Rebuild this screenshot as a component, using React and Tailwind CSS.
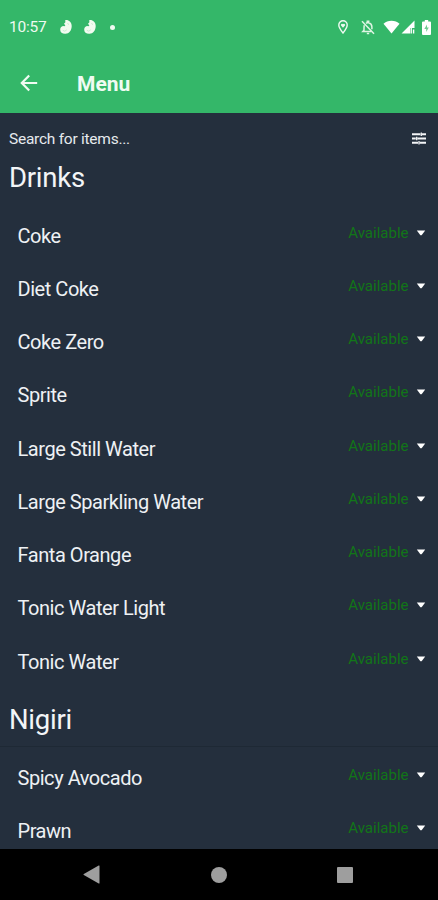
import React, { useState } from "react";

const sections = [
  {
    title: "Drinks",
    items: [
      "Coke",
      "Diet Coke",
      "Coke Zero",
      "Sprite",
      "Large Still Water",
      "Large Sparkling Water",
      "Fanta Orange",
      "Tonic Water Light",
      "Tonic Water",
    ],
  },
  { title: "Nigiri", divider: true, items: ["Spicy Avocado", "Prawn"] },
];

const AppIcon = () => (
  <svg width="12" height="16" viewBox="0 0 12 16" fill="#f2fbf0">
    <path d="M5.200 1.200C8.600.6 11.700 3.300 11.700 7c0 4.500-2.700 7.600-6.200 7.800C2.400 15 .2 13.300.2 10.700c0-2 1.100-3.500 2.800-3.700l1.400.3 1-.9L4 4.800 5.400 3.300z" />
    <path d="M2.800 11.300l2 .9 2-1.400M7.600 4l1 1.800" fill="none" stroke="#bfe8c9" strokeWidth="0.8" />
  </svg>
);

const StatusBar = () => (
  <div className="flex h-[54px] items-center pr-[7.5px] pl-[9px] text-white">
    <span className="w-[51px] text-[15.5px] leading-5 tracking-[-0.2px] text-[#effaf1]">10:57</span>
    <AppIcon />
    <span className="w-[12px]" />
    <AppIcon />
    <span className="ml-[14px] size-[5px] rounded-full bg-[#effaf1]" />
    <div className="ml-auto flex items-center">
      <svg width="10" height="14" viewBox="0 0 10 14" fill="none" stroke="#effaf1" strokeWidth="1.4">
        <path d="M5 13C3 10.500.8 7.800.8 5a4.200 4.200 0 0 1 8.400 0c0 2.800-2.200 5.500-4.200 8z" />
        <path d="M5 7.800 3 5.600a1.200 1.200 0 0 1 2-1.300 1.200 1.200 0 0 1 2 1.300z" fill="#effaf1" stroke="none" />
      </svg>
      <svg className="ml-[13px]" width="14" height="15" viewBox="0 0 14 15" fill="none" stroke="#dff5e4" strokeWidth="1.5">
        <path d="M1 1.300 13 13.800" />
        <path d="M3.300 5.200C2.900 6.500 3 8.500 3 10.300L1.800 11.600H10.300M5 3.400C5.500 3 6 2.800 6.300 2.700V1.300h1.400v1.400c2.100.6 3.200 2.300 3.200 4.300v2.300" />
        <path d="M5.800 13.500h2.400" />
      </svg>
      <svg className="ml-[8px]" width="17" height="14" viewBox="0 0 17 14" fill="white">
        <path d="M8.500 13.500.5 3.800C2.500 1.900 5.300.8 8.500.8s6 1.100 8 3z" />
      </svg>
      <svg className="ml-px" width="14" height="14" viewBox="0 0 14 14" fill="white">
        <path d="M13.500.5V8H9v5.500H.5z" />
        <path d="M10.200 8v5.500M12.600 9.500v4" stroke="white" strokeWidth="1.400" />
      </svg>
      <svg className="ml-[7px]" width="9" height="15" viewBox="0 0 9 15">
        <path d="M2.800 0h3.400v1.500H8q1 0 1 1V14q0 1-1 1H1q-1 0-1-1V2.500q0-1 1-1h1.800z" fill="white" />
        <path d="M5 4.500 2.300 9h1.900v3L6.800 7.600H5z" fill="#6fcb90" />
      </svg>
    </div>
  </div>
);

const Header = () => (
  <header className="h-[113px] shrink-0 bg-[#34b769]">
    <StatusBar />
    <div className="flex h-[58px] items-center pl-[20px] text-[#f0fbf2]">
      <button aria-label="Back">
        <svg width="18" height="18" viewBox="0 0 18 18" fill="none" stroke="currentColor" strokeWidth="2.200">
          <path d="M17.200 9H2.200M9.200 1.500 1.800 9l7.400 7.500" />
        </svg>
      </button>
      <h1 className="mt-[2px] ml-[39px] text-[21px] leading-7 font-bold">Menu</h1>
    </div>
  </header>
);

const SearchBar = () => (
  <div className="flex h-[32.7px] shrink-0 items-end justify-between pr-3 pl-[9px] text-[#e6eaee]">
    <span className="text-[15.5px] leading-[13px] tracking-[-0.25px]">Search for items...</span>
    <svg className="mb-[0.7px]" width="14" height="13" viewBox="0 0 14 13" stroke="#f3f5f7" strokeWidth="2">
      <path d="M0 2.200h8.500M10 2.200H14M0 6.500h3.800M5.300 6.500H14M0 10.800h6M7.500 10.800h6.500" />
      <path d="M9.300.4v3.600M4.700 4.700v3.600M7 9v3.600" strokeWidth="1.300" />
    </svg>
  </div>
);

const MenuItem = ({ name }) => {
  const [available, setAvailable] = useState(true);

  return (
    <div className="flex h-[53.25px] items-center justify-between pr-3 pl-[17.5px]">
      <span className="text-[20px] leading-6 tracking-[-0.45px] text-[#eef1f4]">{name}</span>
      <button className="mb-[6px] flex items-center" onClick={() => setAvailable(!available)}>
        <span className={available ? "text-[15px] leading-5 text-[#127518]" : "text-[15px] leading-5 text-red-700"}>
          {available ? "Available" : "Unavailable"}
        </span>
        <svg className="ml-[7.5px]" width="10" height="6" viewBox="0 0 10 6" fill="white">
          <path d="M.8.500h8.400L5.600 5.200h-1.200z" />
        </svg>
      </button>
    </div>
  );
};

const Section = ({ title, divider, items }) => (
  <section>
    <div className="h-[63.25px]">
      <h2
        className={
          divider
            ? "h-[58.5px] border-b border-[#1e2935] pt-4 pl-[9px] text-[27.5px] leading-8 tracking-[-0.25px] text-[#f3f5f7]"
            : "pt-4 pl-[9px] text-[27.5px] leading-8 tracking-[-0.25px] text-[#f3f5f7]"
        }
      >
        {title}
      </h2>
    </div>
    {items.map((name) => (
      <MenuItem key={name} name={name} />
    ))}
  </section>
);

const NavBar = () => (
  <nav className="flex h-[51px] shrink-0 items-center bg-black pl-[83px]">
    <svg width="17" height="19" viewBox="0 0 17 19" fill="#9e9e9e">
      <path d="M16.500 1v17q0 .8-.8.4L.8 10q-.8-.5 0-1L15.700.6q.8-.4.8.4z" />
    </svg>
    <span className="ml-[111px] size-4 rounded-full bg-[#9e9e9e]" />
    <span className="ml-[110px] size-4 rounded-[1px] bg-[#9e9e9e]" />
  </nav>
);

const App = () => {
  return (
    <div className="flex h-screen flex-col overflow-hidden bg-[#242f3d] font-[Roboto,sans-serif]">
      <Header />
      <SearchBar />
      <main className="min-h-0 flex-1 overflow-hidden">
        {sections.map((section) => (
          <Section key={section.title} {...section} />
        ))}
      </main>
      <NavBar />
    </div>
  );
};

export default App;
